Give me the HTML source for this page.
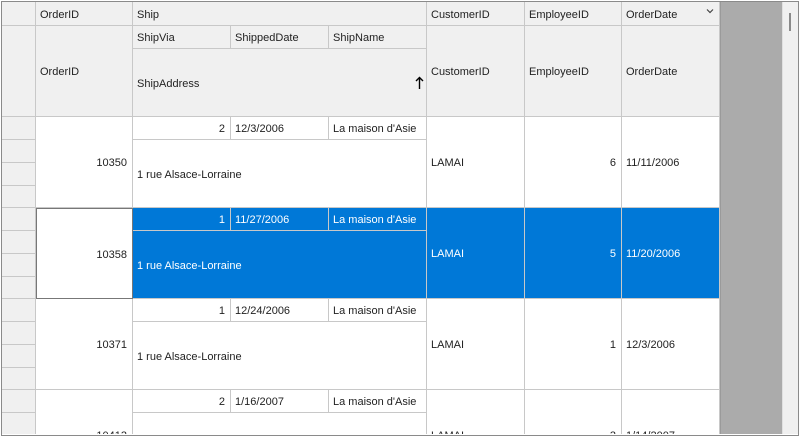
<!DOCTYPE html>
<html><head><meta charset="utf-8"><style>
*{margin:0;padding:0;box-sizing:border-box}
html,body{width:800px;height:438px;overflow:hidden}
body{background:#fff;position:relative;font-family:"Segoe UI","Liberation Sans",sans-serif;font-size:11px;color:#222}
#clip{position:absolute;left:2px;top:2px;width:796px;height:432px;overflow:hidden}
#g{position:absolute;left:-2px;top:-2px;width:800px;height:436px;overflow:hidden}
.c{position:absolute;border-right:1px solid #c8c8c8;border-bottom:1px solid #c8c8c8;display:flex;align-items:center;padding:2px 4px 0 4px;white-space:nowrap;overflow:hidden}
.h{background:#f0f0f0}
.r{justify-content:flex-end;padding-right:5px}
.s{background:#0078d7;color:#fff;border-color:#c8c8c8}
#frame{position:absolute;left:1px;top:1px;width:798px;height:435px;border:1px solid #8a8a8a}
</style></head><body>
<div id="clip"><div id="g">
<div class="c h" style="left:2px;top:2px;width:34px;height:24px"></div>
<div class="c h" style="left:36px;top:2px;width:97px;height:24px">OrderID</div>
<div class="c h" style="left:133px;top:2px;width:294px;height:24px">Ship</div>
<div class="c h" style="left:427px;top:2px;width:98px;height:24px">CustomerID</div>
<div class="c h" style="left:525px;top:2px;width:97px;height:24px">EmployeeID</div>
<div class="c h" style="left:622px;top:2px;width:98px;height:24px">OrderDate<svg style="position:absolute;left:84px;top:6px" width="8" height="6"><path d="M1 1.5L4 4.5L7 1.5" stroke="#444" stroke-width="1.2" fill="none"/></svg></div>
<div class="c h" style="left:2px;top:26px;width:34px;height:91px"></div>
<div class="c h" style="left:36px;top:26px;width:97px;height:91px">OrderID</div>
<div class="c h" style="left:133px;top:26px;width:98px;height:23px">ShipVia</div>
<div class="c h" style="left:231px;top:26px;width:98px;height:23px">ShippedDate</div>
<div class="c h" style="left:329px;top:26px;width:98px;height:23px">ShipName</div>
<div class="c h" style="left:133px;top:49px;width:294px;height:68px">ShipAddress<svg style="position:absolute;left:282px;top:27px" width="9" height="14"><path d="M4.5 13V1.5M1 5L4.5 1.5L8 5" stroke="#000" stroke-width="1.4" fill="none"/></svg></div>
<div class="c h" style="left:427px;top:26px;width:98px;height:91px">CustomerID</div>
<div class="c h" style="left:525px;top:26px;width:97px;height:91px">EmployeeID</div>
<div class="c h" style="left:622px;top:26px;width:98px;height:91px">OrderDate</div>

<div class="c h" style="left:2px;top:117px;width:34px;height:23px"></div>
<div class="c h" style="left:2px;top:140px;width:34px;height:23px"></div>
<div class="c h" style="left:2px;top:163px;width:34px;height:23px"></div>
<div class="c h" style="left:2px;top:186px;width:34px;height:22px"></div>
<div class="c r" style="left:36px;top:117px;width:97px;height:91px">10350</div>
<div class="c r" style="left:133px;top:117px;width:98px;height:23px">2</div>
<div class="c" style="left:231px;top:117px;width:98px;height:23px">12/3/2006</div>
<div class="c" style="left:329px;top:117px;width:98px;height:23px">La maison d'Asie</div>
<div class="c" style="left:133px;top:140px;width:294px;height:68px">1 rue Alsace-Lorraine</div>
<div class="c" style="left:427px;top:117px;width:98px;height:91px">LAMAI</div>
<div class="c r" style="left:525px;top:117px;width:97px;height:91px">6</div>
<div class="c" style="left:622px;top:117px;width:98px;height:91px">11/11/2006</div>

<div class="c h" style="left:2px;top:208px;width:34px;height:23px"></div>
<div class="c h" style="left:2px;top:231px;width:34px;height:23px"></div>
<div class="c h" style="left:2px;top:254px;width:34px;height:23px"></div>
<div class="c h" style="left:2px;top:277px;width:34px;height:22px"></div>
<div class="c r" style="left:36px;top:208px;width:97px;height:91px;border:1px solid #777">10358</div>
<div class="c r s" style="left:133px;top:208px;width:98px;height:23px">1</div>
<div class="c s" style="left:231px;top:208px;width:98px;height:23px">11/27/2006</div>
<div class="c s" style="left:329px;top:208px;width:98px;height:23px">La maison d'Asie</div>
<div class="c s" style="left:133px;top:231px;width:294px;height:68px">1 rue Alsace-Lorraine</div>
<div class="c s" style="left:427px;top:208px;width:98px;height:91px">LAMAI</div>
<div class="c r s" style="left:525px;top:208px;width:97px;height:91px">5</div>
<div class="c s" style="left:622px;top:208px;width:98px;height:91px">11/20/2006</div>

<div class="c h" style="left:2px;top:299px;width:34px;height:23px"></div>
<div class="c h" style="left:2px;top:322px;width:34px;height:23px"></div>
<div class="c h" style="left:2px;top:345px;width:34px;height:23px"></div>
<div class="c h" style="left:2px;top:368px;width:34px;height:22px"></div>
<div class="c r" style="left:36px;top:299px;width:97px;height:91px">10371</div>
<div class="c r" style="left:133px;top:299px;width:98px;height:23px">1</div>
<div class="c" style="left:231px;top:299px;width:98px;height:23px">12/24/2006</div>
<div class="c" style="left:329px;top:299px;width:98px;height:23px">La maison d'Asie</div>
<div class="c" style="left:133px;top:322px;width:294px;height:68px">1 rue Alsace-Lorraine</div>
<div class="c" style="left:427px;top:299px;width:98px;height:91px">LAMAI</div>
<div class="c r" style="left:525px;top:299px;width:97px;height:91px">1</div>
<div class="c" style="left:622px;top:299px;width:98px;height:91px">12/3/2006</div>

<div class="c h" style="left:2px;top:390px;width:34px;height:23px"></div>
<div class="c h" style="left:2px;top:413px;width:34px;height:23px"></div>
<div class="c r" style="left:36px;top:390px;width:97px;height:91px">10413</div>
<div class="c r" style="left:133px;top:390px;width:98px;height:23px">2</div>
<div class="c" style="left:231px;top:390px;width:98px;height:23px">1/16/2007</div>
<div class="c" style="left:329px;top:390px;width:98px;height:23px">La maison d'Asie</div>
<div class="c" style="left:133px;top:413px;width:294px;height:68px">1 rue Alsace-Lorraine</div>
<div class="c" style="left:427px;top:390px;width:98px;height:91px">LAMAI</div>
<div class="c r" style="left:525px;top:390px;width:97px;height:91px">3</div>
<div class="c" style="left:622px;top:390px;width:98px;height:91px">1/14/2007</div>

<div style="position:absolute;left:720px;top:2px;width:62px;height:434px;background:#ababab;border-left:1px solid #9a9a9a"></div>
<div style="position:absolute;left:782px;top:2px;width:16px;height:434px;background:#f0f0f0;border-left:1px solid #e0e0e0"></div>
<div style="position:absolute;left:789px;top:13px;width:2px;height:18px;background:#8a8a8a"></div>
</div></div>
<div id="frame"></div>
</body></html>
